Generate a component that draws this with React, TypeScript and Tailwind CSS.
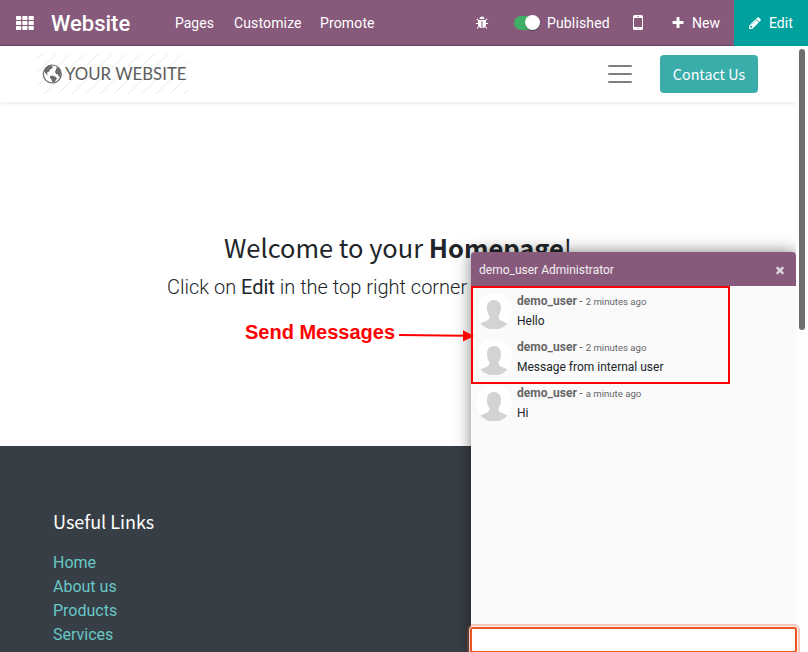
import React from "react";

const roboto = "font-['Roboto','Liberation_Sans',sans-serif]";
const source = "font-['Noto_Sans_CJK_SC','Noto_Sans',sans-serif]";

const bug =
  "M1696 960q0 26-19 45t-45 19h-224q0 171-67 290l208 209q19 19 19 45t-19 45q-18 19-45 19t-45-19l-198-197q-5 5-15 13t-42 28.5-65 36.5-82 29-97 13v-896h-128v896q-51 0-101.5-13.5t-87-33-66-39-43.5-32.5l-15-14-183 207q-20 21-48 21-24 0-43-16-19-18-20.5-44.5t15.5-46.5l202-227q-58-114-58-274h-224q-26 0-45-19t-19-45 19-45 45-19h224v-294l-173-173q-19-19-19-45t19-45 45-19 45 19l173 173h844l173-173q19-19 45-19t45 19 19 45-19 45l-173 173v294h224q26 0 45 19t19 45zm-480-576h-640q0-133 93.5-226.5t226.5-93.5 226.5 93.5 93.5 226.5z";
const plus =
  "M1600 736v192q0 40-28 68t-68 28h-416v416q0 40-28 68t-68 28h-192q-40 0-68-28t-28-68v-416h-416q-40 0-68-28t-28-68v-192q0-40 28-68t68-28h416v-416q0-40 28-68t68-28h192q40 0 68 28t28 68v416h416q40 0 68 28t28 68z";
const pencil =
  "M491 1536l91-91-235-235-91 91v107h128v128h107zm523-928q0-22-22-22-10 0-17 7l-542 542q-7 7-7 17 0 22 22 22 10 0 17-7l542-542q7-7 7-17zm-54-192l416 416-832 832h-416v-416zm683 96q0 53-37 90l-166 166-416-416 166-165q36-38 90-38 53 0 91 38l235 234q37 39 37 91z";
const times =
  "M1490 1322q0 40-28 68l-136 136q-28 28-68 28t-68-28l-294-294-294 294q-28 28-68 28t-68-28l-136-136q-28-28-28-68t28-68l294-294-294-294q-28-28-28-68t28-68l136-136q28-28 68-28t68 28l294 294 294-294q28-28 68-28t68 28l136 136q28 28 28 68t-28 68l-294 294 294 294q28 28 28 68z";

function Icon({ d, className }: { d: string; className: string }) {
  return (
    <svg viewBox="0 0 1792 1792" className={`shrink-0 fill-current ${className}`}>
      <path d={d} />
    </svg>
  );
}

function AppsIcon() {
  return (
    <svg viewBox="0 0 18 14" className="ml-4 h-[14px] w-[18px] shrink-0 fill-white">
      {[0, 5, 10].map((y) =>
        [0, 6.3, 12.6].map((x) => <rect key={`${x}-${y}`} x={x} y={y} width="5.2" height="4" rx="0.7" />)
      )}
    </svg>
  );
}

function TopBar() {
  return (
    <nav className="flex h-[46px] items-stretch bg-[#875a7b] text-sm text-white">
      <div className="flex flex-1 items-center border-b border-[#68465f]">
        <AppsIcon />
        <span className="mt-[2px] ml-[17px] w-[124px] text-[22px] leading-none font-medium">Website</span>
        <span className="w-[59px]">Pages</span>
        <span className="w-[86px] tracking-[0.01em]">Customize</span>
        <span className="tracking-[0.01em]">Promote</span>
        <span className="flex-1" />
        <Icon d={bug} className="mr-[25px] h-[14px] w-[14px]" />
        <span className="flex h-[14px] w-[26px] items-center justify-end rounded-full bg-[#40ad67]">
          <span className="h-[15px] w-[15px] rounded-full bg-white shadow-[0_1px_1px_rgba(0,0,0,.4)]" />
        </span>
        <span className="ml-[7px] w-[86px] tracking-[0.01em]">Published</span>
        <svg viewBox="0 0 10 15" className="h-[15px] w-[10px]">
          <rect width="10" height="15" rx="1.6" fill="white" />
          <rect x="1" y="3" width="8" height="9" fill="#875a7b" />
          <rect x="4" y="1.1" width="2" height=".6" fill="#875a7b" />
          <circle cx="5" cy="13.5" r=".6" fill="#875a7b" />
        </svg>
        <Icon d={plus} className="ml-[28px] h-[14px] w-[14px]" />
        <span className="ml-[7px] w-[42px]">New</span>
      </div>
      <div className="flex w-[74px] items-center bg-[#00a09d] pl-[14px]">
        <Icon d={pencil} className="h-[14px] w-[14px]" />
        <span className="ml-[7px]">Edit</span>
      </div>
    </nav>
  );
}

function Logo() {
  return (
    <div className="relative ml-[38px] h-10 w-[150px]">
      <svg viewBox="0 0 150 40" className="h-10 w-[150px]">
        <g stroke="#e4e4e4" strokeWidth=".8">
          {Array.from({ length: 14 }, (_, i) => {
            const x = i * 14 - 36;
            return <line key={i} x1={x} y1="40" x2={x + 40} y2="0" />;
          })}
        </g>
        <circle cx="14.3" cy="20" r="9" fill="white" stroke="#6c6c6c" strokeWidth="1.2" />
        <path
          fill="#6c6c6c"
          d="M7 15l2.500-3 4-1.500-.5 1.500 2 .5-1 2-2 1-.5 1.800-2 1-.5 1.700 1.500 1.500-1-.3-2-2-1.500-2zM18.500 13.500l2.500.5 2 4-.5 4.500-1.500.5-1-2.500-2-.5-1-2.500 1-2zM12 22l2.500-.5 3.500 1.500 1 1.500-2 3-2.500 1.500-1-3.500-1.500-1.500z"
        />
      </svg>
      <span className="absolute top-[8px] left-[27px] font-['Lato',sans-serif] text-[16.8px] leading-6 whitespace-nowrap text-[#5c5c5c]">
        YOUR WEBSITE
      </span>
    </div>
  );
}

function SiteHeader() {
  return (
    <header className="z-[1] flex h-14 items-center bg-white shadow-[0_2px_4px_rgba(0,0,0,.075)]">
      <Logo />
      <span className="flex-1" />
      <div className="flex w-6 flex-col gap-[6px]">
        <span className="h-[2px] rounded bg-[#808080]" />
        <span className="h-[2px] rounded bg-[#808080]" />
        <span className="h-[2px] rounded bg-[#808080]" />
      </div>
      <button
        className={`mr-[38px] ml-7 h-[38px] w-[98px] rounded bg-[#3aadaa] text-[14.3px] leading-none text-white ${source}`}
      >
        Contact Us
      </button>
    </header>
  );
}

function Avatar() {
  return (
    <svg viewBox="0 0 36 36" className="h-9 w-9 shrink-0">
      <circle cx="18" cy="18" r="18" fill="white" />
      <path
        fill="#d3d3d3"
        d="M18 7c4.500 0 7 3 7 8 0 3.500-1 6.200-2.500 8 0 3 1 4 3.500 5l5.500 2.500A18 18 0 0 1 4.500 30.500L10 28c2.500-1 3.500-2 3.500-5-1.500-1.800-2.500-4.500-2.500-8 0-5 2.500-8 7-8z"
      />
    </svg>
  );
}

function Message({ text, time }: { text: string; time: string }) {
  return (
    <div className="flex h-[46px] pl-[5px]">
      <Avatar />
      <div className="ml-[5px] text-[12px] leading-5 text-[#212529]">
        <div className="-mt-[2px] h-5 text-[#666]">
          <b className="font-bold tracking-[0.05px]">demo_user</b>
          <span className="text-[9.6px]"> </span>- <span className="text-[9.6px]">{time}</span>
        </div>
        <div>{text}</div>
      </div>
    </div>
  );
}

function ChatWindow() {
  return (
    <>
      <section className="absolute top-[252px] left-[471px] z-10 flex h-[400px] w-[325px] flex-col rounded-t bg-[#fafafa] shadow-[0_0_16px_rgba(0,0,0,.5)]">
        <div className="flex h-[34px] items-center justify-between rounded-t bg-[#875a7b] pt-px pr-[10px] pl-2 text-xs text-white/90">
          <span>demo_user Administrator</span>
          <Icon d={times} className="h-3 w-3 opacity-80" />
        </div>
        <div className="flex-1 pt-[7px]">
          <Message text="Hello" time="2 minutes ago" />
          <Message text="Message from internal user" time="2 minutes ago" />
          <Message text="Hi" time="a minute ago" />
        </div>
      </section>
      <div className="absolute top-[627px] left-[470px] z-20 h-[26px] w-[327px] rounded-[3px] border-2 border-[#e95420] bg-white shadow-[0_0_0_1px_rgba(255,255,255,.8),0_0_0_3px_rgba(233,84,32,.3)]" />
    </>
  );
}

function Annotation() {
  return (
    <>
      <span className="absolute top-[320px] left-[245px] z-20 font-['Liberation_Sans',sans-serif] text-[20px] leading-6 font-bold whitespace-nowrap text-[#f00]">
        Send Messages
      </span>
      <svg viewBox="0 0 76 14" className="absolute top-[329px] left-[399px] z-20 h-[14px] w-[76px]">
        <path d="M0 6L66 6.700" stroke="#f00" strokeWidth="2" />
        <path d="M64 1.300L75 7L64 12.500z" fill="#f00" />
      </svg>
      <div className="absolute top-[286px] left-[471px] z-20 h-[98px] w-[259px] border-2 border-[#f00]" />
    </>
  );
}

export default function App() {
  return (
    <div className={`relative flex h-[652px] w-[808px] flex-col overflow-hidden bg-white ${roboto}`}>
      <TopBar />
      <div className="flex flex-1">
        <div className="flex w-[796px] flex-col">
          <SiteHeader />
          <main className="flex h-[344px] flex-col items-center pt-[128px] text-[#212529]">
            <h1 className={`h-[34px] text-[25.45px] leading-[34px] whitespace-nowrap ${source}`}>
              Welcome to your <b>Homepage</b>!
            </h1>
            <p className="mt-[8px] ml-[167px] self-start text-[20px] leading-[30px] font-light whitespace-nowrap">
              Click on <span className="font-normal">Edit</span> in the top right corner
            </p>
          </main>
          <footer className="flex-1 bg-[#383e45] pt-[62px] pl-[53px] text-base text-[#67c8c5]">
            <h2 className={`mb-[17px] text-[18px] leading-[26px] text-white ${source}`}>Useful Links</h2>
            {["Home", "About us", "Products", "Services"].map((link) => (
              <a key={link} className="block leading-6">
                {link}
              </a>
            ))}
          </footer>
        </div>
        <div className="z-[11] w-3 bg-[#fefefe] pt-[3px] pl-[3px]">
          <div className="h-[281px] w-[6px] rounded-full bg-[#6d6d6d]" />
        </div>
      </div>
      <ChatWindow />
      <Annotation />
    </div>
  );
}
